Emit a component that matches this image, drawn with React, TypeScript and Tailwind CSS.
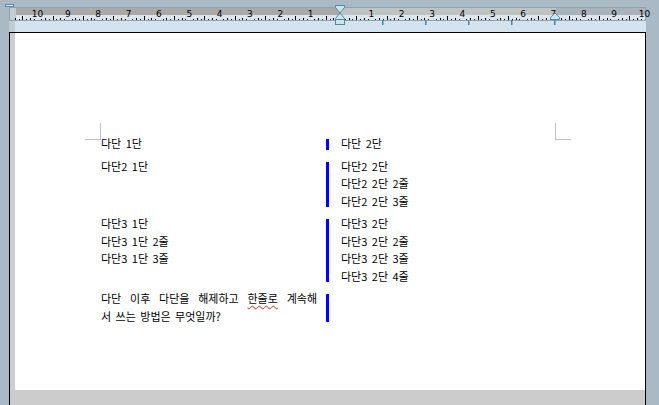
import React from "react";

const U = 30.35;
const C = 331;

function Ruler() {
	const ticks: React.ReactElement[] = [];
	for (let k = -88; k <= 82; k++) {
		const x = C + (k * U) / 8;
		if (x < 1 || x > 636) continue;
		if (k % 8 === 0 && Math.abs(k / 8) <= 10) continue;
		const h = k % 4 === 0 ? 4 : k % 2 === 0 ? 2 : 1;
		ticks.push(<rect key={k} x={Math.round(x)} y={12 - h} width={1} height={h} fill="#000" />);
	}
	const nums: React.ReactElement[] = [];
	for (let n = -10; n <= 10; n++) {
		if (n === 0) continue;
		const x = C + n * U;
		nums.push(
			<text
				key={n}
				x={x}
				y={9}
				textAnchor="middle"
				fontSize="9"
				fontFamily="'DejaVu Sans', sans-serif"
				fill="#000"
			>
				{Math.abs(n)}
			</text>,
		);
	}
	return (
		<svg width="635" height="12" viewBox="0 0 635 12" overflow="visible" className="block overflow-visible">
			<rect x="0" y="0" width="6" height="12" fill="#c3ccd1" />
			<rect x="6" y="0" width="325" height="7" fill="#a9a9a9" />
			<rect x="331" y="0" width="215" height="7" fill="#bec4c4" />
			<rect x="546" y="0" width="89" height="7" fill="#a9b3b9" />
			<rect x="6" y="7" width="629" height="5" fill="#dbe6ec" />
			{ticks}
			{nums}
		</svg>
	);
}

function Markers() {
	return (
		<svg width="659" height="32" viewBox="0 0 659 32" className="absolute left-0 top-0">
			{/* hourglass indent markers */}
			<path d="M335.5 5.5 H344.5 V7.5 L340 13 L335.5 7.5 Z" fill="#cfe3ef" stroke="#4f8aa6" />
			<path d="M340 13 L344.5 18.5 V19.5 H335.5 V18.5 Z" fill="#cfe3ef" stroke="#4f8aa6" />
			<rect x="335.5" y="19.5" width="9" height="5" fill="#cfe3ef" stroke="#4f8aa6" />
			{/* right indent */}
			<path d="M550.5 19.5 V17.5 L555 13 L559.5 17.5 V19.5 Z" fill="#cfe3ef" stroke="#4f8aa6" />
			<rect x="554" y="20" width="1.5" height="5" fill="#3e88b0" />
			{/* column stops */}
			<rect x="382" y="20" width="1.5" height="5" fill="#3e88b0" />
			<rect x="425" y="20" width="1.5" height="5" fill="#3e88b0" />
			<rect x="468" y="20" width="1.5" height="5" fill="#3e88b0" />
			<rect x="511" y="20" width="1.5" height="5" fill="#3e88b0" />
		</svg>
	);
}

type Row = { left: string[]; right: string[]; para?: boolean };

const rows: Row[] = [
	{ left: ["다단 1단"], right: ["다단 2단"] },
	{ left: ["다단2 1단"], right: ["다단2 2단", "다단2 2단 2줄", "다단2 2단 3줄"] },
	{
		left: ["다단3 1단", "다단3 1단 2줄", "다단3 1단 3줄"],
		right: ["다단3 2단", "다단3 2단 2줄", "다단3 2단 3줄", "다단3 2단 4줄"],
	},
	{ left: [], right: [], para: true },
];

function Line({ text }: { text: string }) {
	return <div className="h-[17.5px] leading-[17.5px] whitespace-pre">{text}</div>;
}

function Paragraph() {
	return (
		<>
			<div className="h-[17.5px] leading-[17.5px] text-justify [text-align-last:justify] whitespace-nowrap w-[216px]">
				다단 이후 다단을 해제하고{" "}
				<span className="underline decoration-wavy decoration-[#e0201c] decoration-1 underline-offset-2">
					한줄로
				</span>{" "}
				계속해
			</div>
			<div className="h-[17.5px] leading-[17.5px]">서 쓰는 방법은 무엇일까?</div>
		</>
	);
}

export default function App() {
	return (
		<div className="w-[659px] h-[405px] overflow-hidden bg-[#a9bac6] flex flex-col font-['Noto_Sans_CJK_KR',sans-serif] text-[11px] text-black">
			<div className="relative h-[32px] shrink-0">
				<div className="h-[7px] flex items-start">
					<div className="ml-[5px] mt-[4px] w-[9px] h-[3px] border border-[#5f8ca4] bg-[#dbe8f0]" />
				</div>
				<div className="ml-[9px] w-[637px] h-[14px] border border-[#8ea3b0]">
					<Ruler />
				</div>
				<div className="ml-[9px] w-[637px] h-[11px] flex">
					<div className="w-[6px] bg-[#c3ccd1]" />
					<div className="flex-1 bg-[#d3e3ef]" />
				</div>
				<Markers />
			</div>
			<div className="flex-1 flex">
				<div className="w-[9px]" />
				<div className="w-[637px] border-x border-t border-black bg-[#cccccc] pl-[5px] flex flex-col">
					<div className="h-[357px] bg-white pl-[85px] pt-[102px]">
						<div className="relative w-[455px] flex flex-col gap-[5px] [word-spacing:2px]">
							<div className="absolute left-0 top-[-12px] w-px h-[16px] bg-[#c0c0c0]" />
							<div className="absolute left-[-15px] top-[4px] w-[16px] h-px bg-[#c0c0c0]" />
							<div className="absolute left-[455px] top-[-12px] w-px h-[16px] bg-[#c0c0c0]" />
							<div className="absolute left-[455px] top-[4px] w-[16px] h-px bg-[#c0c0c0]" />
							{rows.map((r, i) => (
								<div key={i} className="flex">
									<div className="w-[226px] pl-px">
										{r.para ? <Paragraph /> : r.left.map((t, j) => <Line key={j} text={t} />)}
									</div>
									<div className="w-[3px] bg-[#0000ff] mt-[4px] mb-[3px]" />
									<div className="pl-[12px]">
										{r.right.map((t, j) => (
											<Line key={j} text={t} />
										))}
									</div>
								</div>
							))}
						</div>
					</div>
				</div>
			</div>
		</div>
	);
}
